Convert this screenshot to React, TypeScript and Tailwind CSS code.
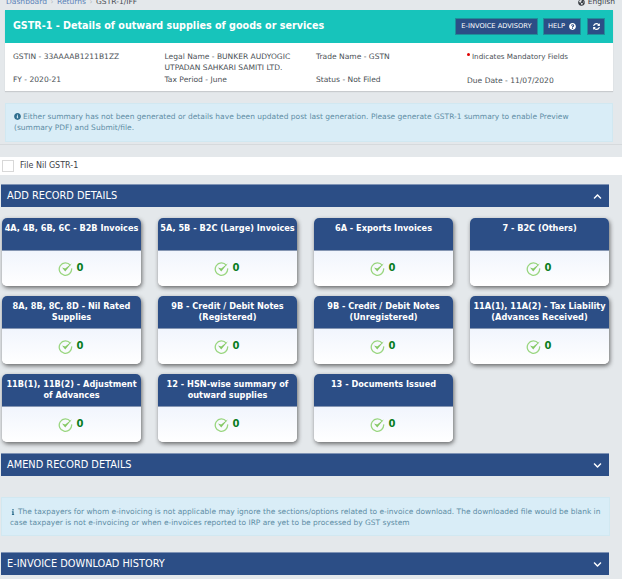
import { FaChevronDown, FaChevronUp, FaGlobeAmericas, FaInfo, FaInfoCircle, FaQuestionCircle, FaSyncAlt } from "react-icons/fa";

const font = "font-['DejaVu_Sans','Liberation_Sans',sans-serif]";

function CheckMark() {
  return (
    <svg width="15" height="15" viewBox="0 0 15 15" fill="none">
      <path d="M12.4 4.4A6.2 6.2 0 1 0 13.6 7.4" stroke="#9ad680" strokeWidth="1.3" />
      <path d="M4 6.6 7.2 10.6 14 2.2 7.2 7.6Z" fill="#84c864" />
    </svg>
  );
}

function Card({ title }: { title: string }) {
  return (
    <div className="h-[68px] rounded-[5px] bg-white shadow-[1px_2px_4px_rgba(40,40,40,0.65)] overflow-hidden flex flex-col">
      <div className="h-[33px] shrink-0 bg-[#2c4e86] border-b border-[#8596b3] text-white font-bold text-[8.2px] leading-[11.3px] text-center pt-[5px] whitespace-pre">
        {title}
      </div>
      <div className="flex-1 flex items-center justify-center gap-[4px] bg-gradient-to-b from-[#f1f5fd] to-white pr-[2px]">
        <CheckMark />
        <span className="text-[10px] font-bold text-[#0a7d1e] -mt-[2px]">0</span>
      </div>
    </div>
  );
}

function Bar({ title, up, className }: { title: string; up?: boolean; className: string }) {
  return (
    <div className={`h-[23px] w-[608px] ml-[1px] bg-[#2c4e86] border-t border-[#7f93b5] text-white flex items-center justify-between pl-[6px] pr-[7px] text-[9.8px] ${className}`}>
      <span>{title}</span>
      {up ? <FaChevronUp size={9} /> : <FaChevronDown size={9} />}
    </div>
  );
}

const cards = [
  "4A, 4B, 6B, 6C - B2B Invoices",
  "5A, 5B - B2C (Large) Invoices",
  "6A - Exports Invoices",
  "7 - B2C (Others)",
  "8A, 8B, 8C, 8D - Nil Rated\nSupplies",
  "9B - Credit / Debit Notes\n(Registered)",
  "9B - Credit / Debit Notes\n(Unregistered)",
  "11A(1), 11A(2) - Tax Liability\n(Advances Received)",
  "11B(1), 11B(2) - Adjustment\nof Advances",
  "12 - HSN-wise summary of\noutward supplies",
  "13 - Documents Issued",
];

export default function App() {
  return (
    <div className={`${font} w-[622px] h-[579px] overflow-hidden bg-[#e4e8eb] text-[7.55px] text-[#4a4f55]`}>
      <div className="h-[6px] overflow-hidden flex items-end justify-between pl-[6px] pr-[7px] leading-[8px]">
        <div className="flex gap-[3.5px] text-[#5b82b8]">
          <span>Dashboard</span>
          <span className="text-[#b5bbc1]">›</span>
          <span>Returns</span>
          <span className="text-[#b5bbc1]">›</span>
          <span className="text-[#4a4f55]">GSTR-1/IFF</span>
        </div>
        <div className="flex items-center gap-[3px] text-[#3d4248]">
          <FaGlobeAmericas size={7} />
          <span>English</span>
        </div>
      </div>

      <div className="mt-[4px] ml-[5px] w-[608px] shadow-[0_1px_1px_rgba(0,0,0,0.12)]">
        <div className="h-[33px] bg-[#17c4bb] flex items-center justify-between pl-[8px] pr-[8px]">
          <h1 className="text-white font-bold text-[9.6px]">GSTR-1 - Details of outward supplies of goods or services</h1>
          <div className="flex gap-[5px] text-white text-[6.7px]">
            <div className="h-[17px] w-[83px] flex items-center justify-center bg-[#2c4e86] border border-[#1f8f99]">E-INVOICE ADVISORY</div>
            <div className="h-[17px] w-[38px] flex items-center justify-center gap-[4px] bg-[#2c4e86] border border-[#1f8f99]">HELP <FaQuestionCircle size={7} /></div>
            <div className="h-[17px] w-[18px] ml-[1px] flex items-center justify-center bg-[#2c4e86] border border-[#1f8f99]"><FaSyncAlt size={7} /></div>
          </div>
        </div>
        <div className="h-[48px] bg-white grid grid-cols-[151.5px_151.5px_152px_1fr] grid-rows-[26px_22px] pl-[8px] leading-[11px]">
          <div className="pt-[8px]">GSTIN - 33AAAAB1211B1ZZ</div>
          <div className="pt-[8px] whitespace-nowrap">Legal Name - BUNKER AUDYOGIC<br />UTPADAN SAHKARI SAMITI LTD.</div>
          <div className="pt-[8px]">Trade Name - GSTN</div>
          <div className="pt-[8px] -ml-[1px] text-[7.2px] flex items-start gap-[2px]"><span className="w-[3px] h-[3px] mt-[2px] rounded-full bg-[#e00000]" />Indicates Mandatory Fields</div>
          <div className="pt-[5px]">FY - 2020-21</div>
          <div className="pt-[5px]">Tax Period - June</div>
          <div className="pt-[5px]">Status - Not Filed</div>
          <div className="pt-[6px] -ml-[1px]">Due Date - 11/07/2020</div>
        </div>
      </div>

      <div className="mt-[12px] ml-[5px] w-[608px] h-[39px] bg-[#d9edf7] border border-[#d1e8f1] text-[#5f8da6] pl-[8px] pt-[7px] leading-[11px] whitespace-nowrap text-[7.5px]">
        <FaInfoCircle size={7} className="inline text-[#2f6f8f] mr-[2px] align-[-0.5px]" />
        Either summary has not been generated or details have been updated post last generation. Please generate GSTR-1 summary to enable Preview<br />(summary PDF) and Submit/file.
      </div>

      <div className="mt-[2px] h-px bg-[#d6dadd]" />

      <div className="mt-[12px] h-[18px] bg-white flex items-center pl-[2px] text-[#3d4248] text-[8px]">
        <span className="w-[12px] h-[12px] border border-[#d8d8d8] bg-white mr-[6px]" />
        File Nil GSTR-1
      </div>

      <Bar title="ADD RECORD DETAILS" up className="mt-[9px]" />

      <div className="mt-[11px] ml-[2px] w-[607px] grid grid-cols-4 gap-x-[17px] gap-y-[10px] h-[224px]">
        {cards.map((t, i) => <Card key={i} title={t} />)}
      </div>

      <Bar title="AMEND RECORD DETAILS" className="mt-[11px]" />

      <div className="mt-[21px] ml-[1px] w-[609px] h-[39px] bg-[#d9edf7] border border-[#d1e8f1] text-[#5f8da6] pl-[8px] pt-[8px] leading-[11px] whitespace-nowrap text-[7.47px]">
        <FaInfo size={6} className="inline text-[#2f6f8f] mr-[2px] align-[-0.5px]" />
        The taxpayers for whom e-invoicing is not applicable may ignore the sections/options related to e-invoice download. The downloaded file would be blank in<br />case taxpayer is not e-invoicing or when e-invoices reported to IRP are yet to be processed by GST system
      </div>

      <Bar title="E-INVOICE DOWNLOAD HISTORY" className="mt-[16px]" />
    </div>
  );
}
